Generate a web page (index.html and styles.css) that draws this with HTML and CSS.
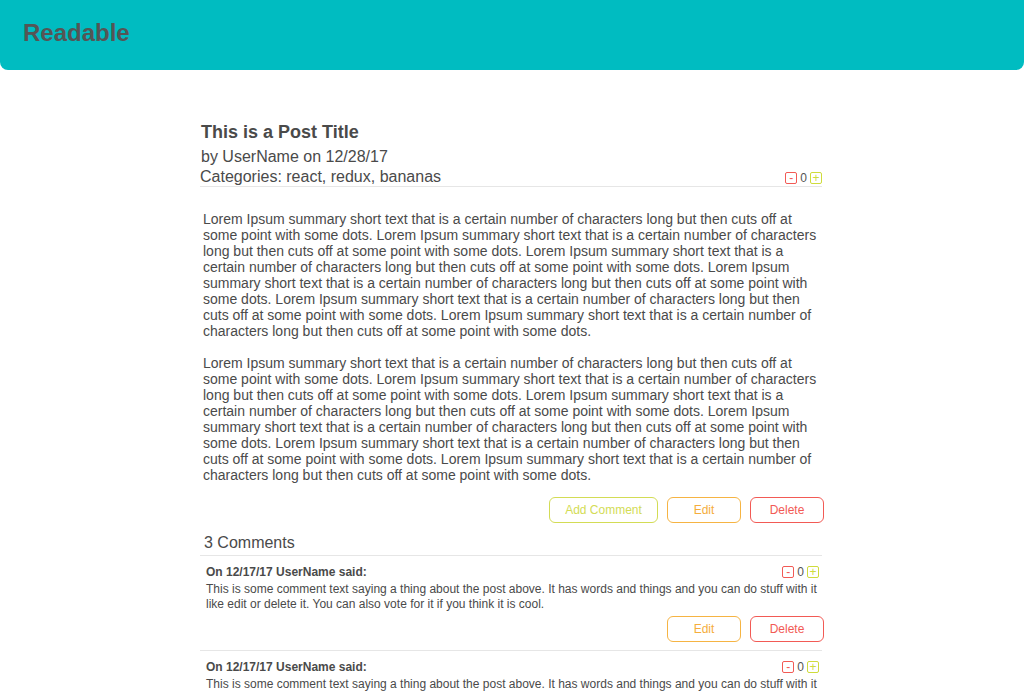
FILE: index.html
```html
<!DOCTYPE html>
<html>
<head>
<meta charset="utf-8">
<title>Readable</title>
<link rel="stylesheet" href="styles.css">
</head>
<body>
<header class="app-header">
  <h1 class="brand">Readable</h1>
</header>
<main class="post">
  <div class="post-head">
    <h2 class="post-title">This is a Post Title</h2>
    <div class="post-by">by UserName on 12/28/17</div>
    <div class="post-cats-row">
      <div class="post-cats">Categories: react, redux, bananas</div>
      <div class="votes">
        <span class="vote vote-down">-</span>
        <span class="score">0</span>
        <span class="vote vote-up">+</span>
      </div>
    </div>
  </div>
  <div class="post-body">
    <p>Lorem Ipsum summary short text that is a certain number of characters long but then cuts off at some point with some dots. Lorem Ipsum summary short text that is a certain number of characters long but then cuts off at some point with some dots. Lorem Ipsum summary short text that is a certain number of characters long but then cuts off at some point with some dots. Lorem Ipsum summary short text that is a certain number of characters long but then cuts off at some point with some dots. Lorem Ipsum summary short text that is a certain number of characters long but then cuts off at some point with some dots. Lorem Ipsum summary short text that is a certain number of characters long but then cuts off at some point with some dots.</p>
    <p>Lorem Ipsum summary short text that is a certain number of characters long but then cuts off at some point with some dots. Lorem Ipsum summary short text that is a certain number of characters long but then cuts off at some point with some dots. Lorem Ipsum summary short text that is a certain number of characters long but then cuts off at some point with some dots. Lorem Ipsum summary short text that is a certain number of characters long but then cuts off at some point with some dots. Lorem Ipsum summary short text that is a certain number of characters long but then cuts off at some point with some dots. Lorem Ipsum summary short text that is a certain number of characters long but then cuts off at some point with some dots.</p>
  </div>
  <div class="actions">
    <button class="btn btn-add">Add Comment</button>
    <button class="btn btn-edit">Edit</button>
    <button class="btn btn-delete">Delete</button>
  </div>
  <h3 class="comments-title">3 Comments</h3>
  <section class="comment">
    <div class="comment-head">
      <div class="comment-meta">On 12/17/17 UserName said:</div>
      <div class="votes">
        <span class="vote vote-down">-</span>
        <span class="score">0</span>
        <span class="vote vote-up">+</span>
      </div>
    </div>
    <div class="comment-text">This is some comment text saying a thing about the post above. It has words and things and you can do stuff with it like edit or delete it. You can also vote for it if you think it is cool.</div>
    <div class="actions comment-actions">
      <button class="btn btn-edit">Edit</button>
      <button class="btn btn-delete">Delete</button>
    </div>
  </section>
  <section class="comment">
    <div class="comment-head">
      <div class="comment-meta">On 12/17/17 UserName said:</div>
      <div class="votes">
        <span class="vote vote-down">-</span>
        <span class="score">0</span>
        <span class="vote vote-up">+</span>
      </div>
    </div>
    <div class="comment-text">This is some comment text saying a thing about the post above. It has words and things and you can do stuff with it like edit or delete it. You can also vote for it if you think it is cool.</div>
    <div class="actions comment-actions">
      <button class="btn btn-edit">Edit</button>
      <button class="btn btn-delete">Delete</button>
    </div>
  </section>
</main>
</body>
</html>
```

FILE: styles.css
```css
* { box-sizing: border-box; }
body {
  margin: 0;
  font-family: "Liberation Sans", Arial, sans-serif;
  color: #4a4a4a;
  background: #fff;
}
.app-header {
  height: 70px;
  background: #00bcc1;
  border-radius: 0 0 8px 8px;
  padding: 0 23px;
  display: flex;
  align-items: center;
}
.brand {
  margin: 0;
  font-size: 24px;
  font-weight: bold;
  color: #555;
  line-height: 28px;
  padding-bottom: 4px;
}
.post {
  width: 624px;
  margin: 48px auto 0;
}
.post-head {
  border-bottom: 1px solid #e6e6e6;
  margin-right: 2px;
}
.post-title {
  margin: 0;
  padding-left: 1px;
  font-size: 18px;
  font-weight: bold;
  line-height: 28px;
}
.post-by {
  padding-left: 1px;
  font-size: 16px;
  line-height: 21px;
}
.post-cats-row {
  display: flex;
  justify-content: space-between;
  align-items: flex-end;
}
.post-cats {
  font-size: 16px;
  line-height: 19px;
}
.votes {
  display: flex;
  align-items: center;
  gap: 3px;
  font-size: 12px;
  line-height: 11px;
  padding-bottom: 2px;
}
.vote {
  width: 12px;
  height: 12px;
  border: 1px solid;
  border-radius: 2px;
  display: flex;
  align-items: center;
  justify-content: center;
  font-size: 12px;
  line-height: 1;
}
.vote-down { border-color: #f25a55; color: #f25a55; }
.vote-up { border-color: #cfdc3c; color: #cfdc3c; }
.score { color: #555; }
.post-body {
  padding: 24px 1px 0 3px;
  font-size: 14px;
  line-height: 16px;
}
.post-body p { margin: 0 0 16px; }
.post-body p:last-child { margin-bottom: 0; }
.actions {
  display: flex;
  justify-content: flex-end;
  gap: 9px;
  margin-top: 14px;
}
.btn {
  height: 26px;
  background: #fff;
  border: 1px solid;
  border-radius: 6px;
  font-family: "Liberation Sans", Arial, sans-serif;
  font-size: 12px;
  padding: 0;
  width: 74px;
}
.btn-add { width: 109px; border-color: #d3dc55; color: #d3dc55; }
.btn-edit { border-color: #f6b443; color: #f5ad3c; }
.btn-delete { border-color: #f25a55; color: #f25a55; }
.comments-title {
  margin: 10px 2px 0 0;
  padding: 0 0 2px 4px;
  font-size: 16px;
  font-weight: normal;
  line-height: 20px;
  border-bottom: 1px solid #e6e6e6;
}
.comment {
  margin-right: 2px;
  padding: 8px 0 8px 6px;
  border-bottom: 1px solid #e6e6e6;
}
.comment-head {
  display: flex;
  justify-content: space-between;
  align-items: center;
  padding-right: 3px;
}
.comment-meta {
  font-size: 12px;
  font-weight: bold;
  line-height: 16px;
}
.comment-head .votes { padding-bottom: 0; }
.comment-text {
  font-size: 12px;
  line-height: 15px;
  margin-top: 2px;
  padding-right: 4px;
}
.comment-actions {
  margin-top: 4px;
  margin-right: -2px;
}
```
